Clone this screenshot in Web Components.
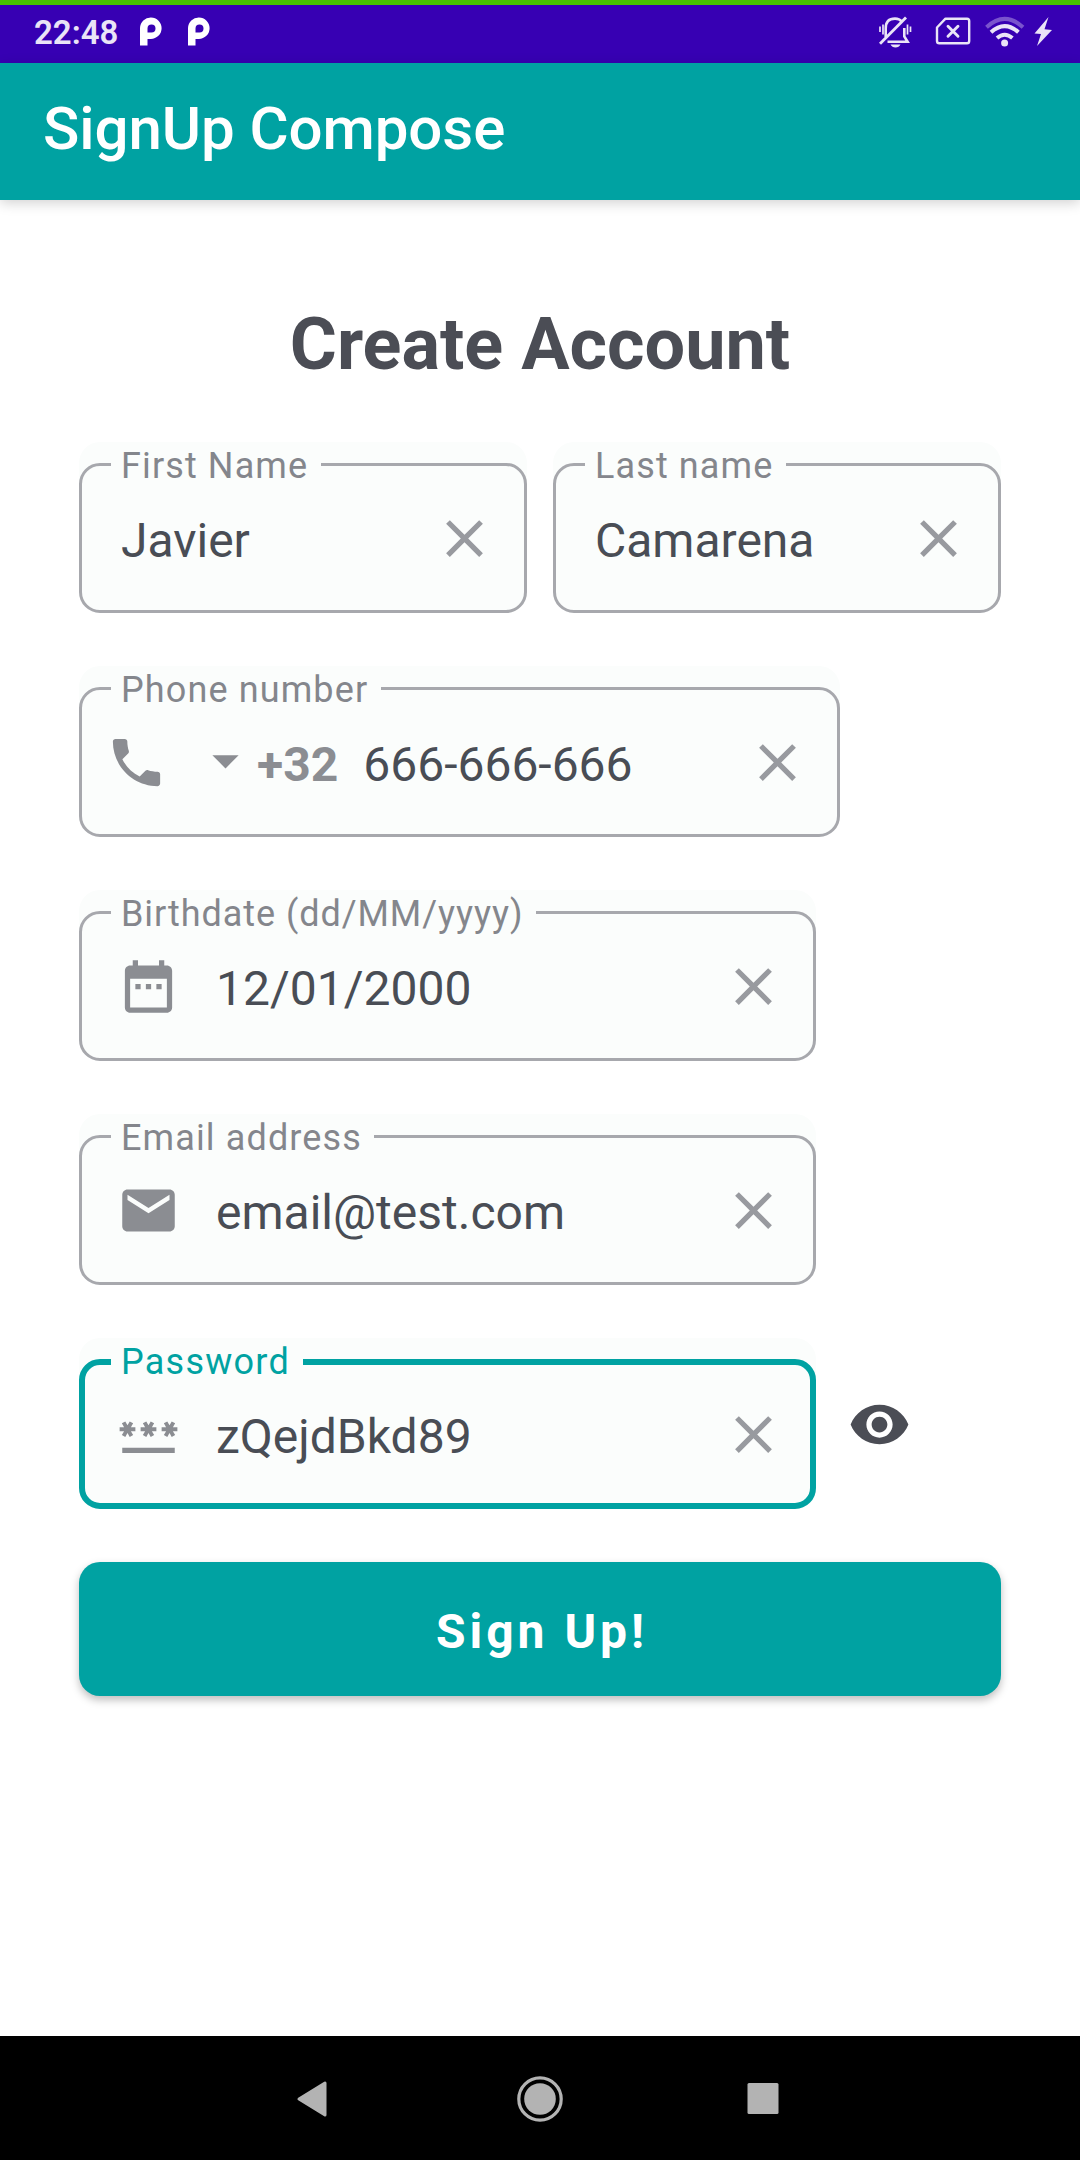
<!DOCTYPE html>
<html lang="en">
<head>
<meta charset="utf-8">
<title>SignUp Compose</title>
<style>
  html, body { margin: 0; padding: 0; background: #fff; }
  body { width: 1080px; height: 2160px; overflow: hidden; font-family: Roboto, "Liberation Sans", sans-serif; }
</style>
</head>
<body>
<signup-screen></signup-screen>
<script>
const define = (name, html, setup) => {
  const tpl = document.createElement('template');
  tpl.innerHTML = html;
  customElements.define(name, class extends HTMLElement {
    constructor() {
      super();
      this.attachShadow({ mode: 'open' }).append(tpl.content.cloneNode(true));
    }
    connectedCallback() { if (setup) setup(this, this.shadowRoot); }
  });
};

const ICONS = {
  close: 'M19 6.41L17.59 5 12 10.59 6.41 5 5 6.41 10.59 12 5 17.59 6.41 19 12 13.41 17.59 19 19 17.59 13.41 12z',
  phone: 'M6.62 10.79c1.44 2.83 3.76 5.14 6.59 6.59l2.2-2.2c.27-.27.67-.36 1.02-.24 1.12.37 2.33.57 3.57.57.55 0 1 .45 1 1V20c0 .55-.45 1-1 1-9.39 0-17-7.61-17-17 0-.55.45-1 1-1h3.5c.55 0 1 .45 1 1 0 1.25.2 2.45.57 3.57.11.35.03.74-.25 1.02l-2.2 2.2z',
  drop: 'M7 10l5 5 5-5z',
  date: 'M9 11H7v2h2v-2zm4 0h-2v2h2v-2zm4 0h-2v2h2v-2zm2-7h-1V2h-2v2H8V2H6v2H5c-1.11 0-1.99.9-1.99 2L3 20c0 1.1.89 2 2 2h14c1.1 0 2-.9 2-2V6c0-1.1-.9-2-2-2zm0 16H5V9h14v11z',
  email: 'M20 4H4c-1.1 0-1.99.9-1.99 2L2 18c0 1.1.9 2 2 2h16c1.1 0 2-.9 2-2V6c0-1.1-.9-2-2-2zm0 4l-8 5-8-5V6l8 5 8-5v2z',
  password: 'M2 17h20v2H2zM3.15 12.95L4 11.47l.85 1.48 1.3-.75-.85-1.48H7v-1.5H5.3l.85-1.47L4.85 7 4 8.47 3.15 7l-1.3.75.85 1.47H1v1.5h1.7l-.85 1.48zM9.85 12.2l1.3.75.85-1.48.85 1.48 1.3-.75-.85-1.48H15v-1.5h-1.7l.85-1.47-1.3-.75L12 8.47 11.15 7l-1.3.75.85 1.47H9v1.5h1.7zM23 9.22h-1.7l.85-1.47-1.3-.75L20 8.47 19.15 7l-1.3.75.85 1.47H17v1.5h1.7l-.85 1.48 1.3.75.85-1.48.85 1.48 1.3-.75-.85-1.48H23z',
  eye: 'M12 4.5C7 4.5 2.73 7.61 1 12c1.73 4.39 6 7.5 11 7.5s9.27-3.11 11-7.5c-1.73-4.39-6-7.5-11-7.5zM12 17c-2.76 0-5-2.24-5-5s2.24-5 5-5 5 2.24 5 5-2.24 5-5 5zm0-8c-1.66 0-3 1.34-3 3s1.34 3 3 3 3-1.34 3-3-1.34-3-3-3z'
};

define('md-icon', `
  <style>
    :host { display: block; flex: none; width: 63px; height: 63px; color: #8b8d92; }
    svg { display: block; width: 100%; height: 100%; }
  </style>
  <svg viewBox="0 0 24 24" fill="currentColor"><path/></svg>`,
  (el, root) => root.querySelector('path').setAttribute('d', ICONS[el.getAttribute('name')]));

define('status-bar', `
  <style>
    :host { display: flex; align-items: flex-start; box-sizing: border-box; height: 63px; background: #3700b3; border-top: 5px solid #47c200; padding: 0 28px 0 34px; color: #eae4f7; }
    svg { display: block; flex: none; }
    .time { font-size: 33px; line-height: 38px; font-weight: 600; margin-top: 9px; width: 106px; white-space: nowrap; }
    .p { margin-top: 12px; }
    .p + .p { margin-left: 26px; }
    .space { flex: 1; }
    .wide { margin-top: 10px; }
  </style>
  <span class="time">22:48</span>
  <svg class="p" width="22" height="29" viewBox="0 0 22 29"><path fill="#fff" fill-rule="evenodd" d="M0 28.500V11A10.800 10.800 0 1 1 10.800 22H7.500V28.500ZM7.500 15.500H11.500A4 4 0 1 0 7.500 11.500Z"/></svg>
  <svg class="p" width="22" height="29" viewBox="0 0 22 29"><path fill="#fff" fill-rule="evenodd" d="M0 28.500V11A10.800 10.800 0 1 1 10.800 22H7.500V28.500ZM7.500 15.500H11.500A4 4 0 1 0 7.500 11.500Z"/></svg>
  <span class="space"></span>
  <svg class="wide" width="34" height="34" viewBox="878 15 34 34" fill="none" stroke="#eae4f7" stroke-width="2.600">
    <path d="M885.700 37V28.500Q885.700 18.600 895 18.600Q899.500 18.600 901.700 21.600M904.300 28V36.500L907.600 41.800H887.500"/>
    <path d="M880 43.800L906 17.500" stroke-width="2.800"/>
    <path d="M880 26.500V32M883 24.500V34.500M907.500 24.500V34.500M910.500 26.500V32" stroke-width="1.700"/>
    <path d="M890.500 44.500H900.500Q899 47.500 895.500 47.500T890.500 44.500Z" fill="#eae4f7" stroke="none"/>
  </svg>
  <svg class="wide" style="margin-left:23px" width="36" height="34" viewBox="935 15 36 34" fill="none" stroke="#eae4f7" stroke-width="2.400">
    <path d="M945.500 18.700H967Q969.200 18.700 969.200 21V41Q969.200 43.300 967 43.300H939.300Q937 43.300 937 41V27.500Z" stroke-linejoin="round"/>
    <path d="M948 26.200L958 36.200M958 26.200L948 36.200" stroke-width="2.900" stroke-linecap="round"/>
  </svg>
  <svg class="wide" style="margin-left:14px" width="40" height="34" viewBox="985 15 40 34" fill="none" stroke="#eae4f7" stroke-width="4">
    <path d="M986.500 27.200Q1004.700 10.500 1023 27.200" stroke="#7a54cd"/>
    <path d="M991 32.300Q1004.700 20 1018.400 32.300M997 38Q1004.700 31.500 1012.400 38"/>
    <circle cx="1004.600" cy="43" r="3.500" fill="#eae4f7" stroke="none"/>
  </svg>
  <svg class="wide" style="margin-left:9px" width="18" height="34" viewBox="1034 15 18 34"><path fill="#eae4f7" d="M1048.500 17L1034.500 33.500L1041 34L1037 46L1052 30L1044.500 29.200Z"/></svg>`);

define('app-bar', `
  <style>
    :host { display: flex; align-items: center; height: 137px; box-sizing: border-box; padding: 0 43px 7px; background: #00a2a2; color: #fff; font-size: 60px; letter-spacing: -.070px; font-weight: 500; box-shadow: 0 3px 12px rgba(0,0,0,.18); white-space: nowrap; }
  </style><slot></slot>`);

define('outlined-field', `
  <style>
    :host { --bw: 3px; --line: #a7a8ad; --tracking: 1.120px; display: block; flex: none; width: 737px; height: 171px; background: #fbfdfc; border-radius: 21px; color: #494d55; }
    :host([focused]) { --bw: 6px; --line: #00a2a2; --tracking: 1.250px; }
    fieldset { box-sizing: border-box; height: 171px; min-width: 0; margin: 0; padding: 0; border: var(--bw) solid var(--line); border-radius: 21px; }
    legend { box-sizing: border-box; height: calc(42px + var(--bw)); margin-left: calc(32px - var(--bw)); padding: 0 12.500px 0 10px; color: #84868c; font-size: 36px; line-height: 49px; letter-spacing: var(--tracking); white-space: nowrap; }
    :host([focused]) legend { color: #00a2a2; }
    .row { display: flex; align-items: center; box-sizing: border-box; height: 105px; margin: calc(2px - var(--bw)) calc(-1 * var(--bw)) 0; padding-right: 31px; }
    .value { flex: 1; font-size: 48px; line-height: 56px; margin-top: 4px; padding-left: 42px; white-space: nowrap; }
    :host([lead]) .value { padding-left: 36px; }
    :host([phone]) .value { padding-left: 25px; }
    ::slotted(md-icon) { margin-left: 38px; }
    .clear { color: #989a9f; }
  </style>
  <fieldset>
    <legend></legend>
    <div class="row"><slot name="lead"></slot><div class="value"><slot></slot></div><md-icon class="clear" name="close"></md-icon></div>
  </fieldset>`,
  (el, root) => root.querySelector('legend').textContent = el.getAttribute('label'));

define('phone-prefix', `
  <style>
    :host { display: flex; align-items: center; padding-left: 26px; color: #8b8d92; font-size: 48px; font-weight: 700; }
    .drop { margin: -4px 0 0 26px; }
    span { line-height: 56px; margin-top: 4px; white-space: nowrap; }
  </style>
  <md-icon name="phone"></md-icon><md-icon class="drop" name="drop"></md-icon><span><slot></slot></span>`);

define('primary-button', `
  <style>
    :host { display: flex; align-items: center; justify-content: center; height: 134px; border-radius: 21px; background: #00a2a2; color: #fff; font-size: 48px; font-weight: 700; letter-spacing: 4px; box-shadow: 0 4px 8px rgba(0,0,0,.26); }
    span { margin: 4px 0 0 4px; }
  </style><span><slot></slot></span>`);

define('nav-bar', `
  <style>
    :host { display: grid; grid-template-columns: repeat(3, 1fr); width: 677px; padding: 0 201.500px; height: 124px; background: #000; align-items: center; justify-items: center; }
    svg { display: block; }
    .back { margin: 2px 5px 0 0; }
    .recent { margin-right: 5px; }
  </style>
  <svg class="back" width="32" height="48" viewBox="0 0 32 48"><path d="M3 24L29 8V40Z" fill="#b3b3b3" stroke="#b3b3b3" stroke-width="3" stroke-linejoin="round"/></svg>
  <svg width="48" height="48" viewBox="0 0 48 48"><circle cx="24" cy="25" r="21.200" fill="none" stroke="#b3b3b3" stroke-width="3.200"/><circle cx="24" cy="25" r="15.800" fill="#b3b3b3"/></svg>
  <svg class="recent" width="32" height="48" viewBox="0 0 32 48"><rect x=".5" y="9" width="31" height="31" rx="1.500" fill="#b3b3b3"/></svg>`);

define('signup-screen', `
  <style>
    :host { display: flex; flex-direction: column; width: 1080px; height: 2160px; background: #fff; }
    main { flex: 1; padding: 0 79px; display: flex; flex-direction: column; }
    h1 { margin: 100px 0 0; height: 142px; line-height: 90px; font-size: 72px; font-weight: 700; text-align: center; color: #4b4d55; }
    form { display: flex; flex-direction: column; gap: 53px; }
    .names { display: flex; gap: 26px; }
    .names outlined-field { width: 448px; }
    .password { display: flex; align-items: center; gap: 32px; }
    .password > md-icon { color: #4b4d55; margin-top: 2px; }
    .phone { width: 761px; }
    .birth { --tracking: .940px; }
  </style>
  <status-bar></status-bar>
  <app-bar>SignUp Compose</app-bar>
  <main>
    <h1>Create Account</h1>
    <form>
      <div class="names">
        <outlined-field label="First Name">Javier</outlined-field>
        <outlined-field label="Last name">Camarena</outlined-field>
      </div>
      <outlined-field class="phone" phone label="Phone number"><phone-prefix slot="lead">+32</phone-prefix>666-666-666</outlined-field>
      <outlined-field class="birth" lead label="Birthdate (dd/MM/yyyy)"><md-icon slot="lead" name="date"></md-icon>12/01/2000</outlined-field>
      <outlined-field lead label="Email address"><md-icon slot="lead" name="email"></md-icon>email@test.com</outlined-field>
      <div class="password">
        <outlined-field lead focused label="Password"><md-icon slot="lead" name="password"></md-icon>zQejdBkd89</outlined-field>
        <md-icon name="eye"></md-icon>
      </div>
      <primary-button>Sign Up!</primary-button>
    </form>
  </main>
  <nav-bar></nav-bar>`);
</script>
</body>
</html>
